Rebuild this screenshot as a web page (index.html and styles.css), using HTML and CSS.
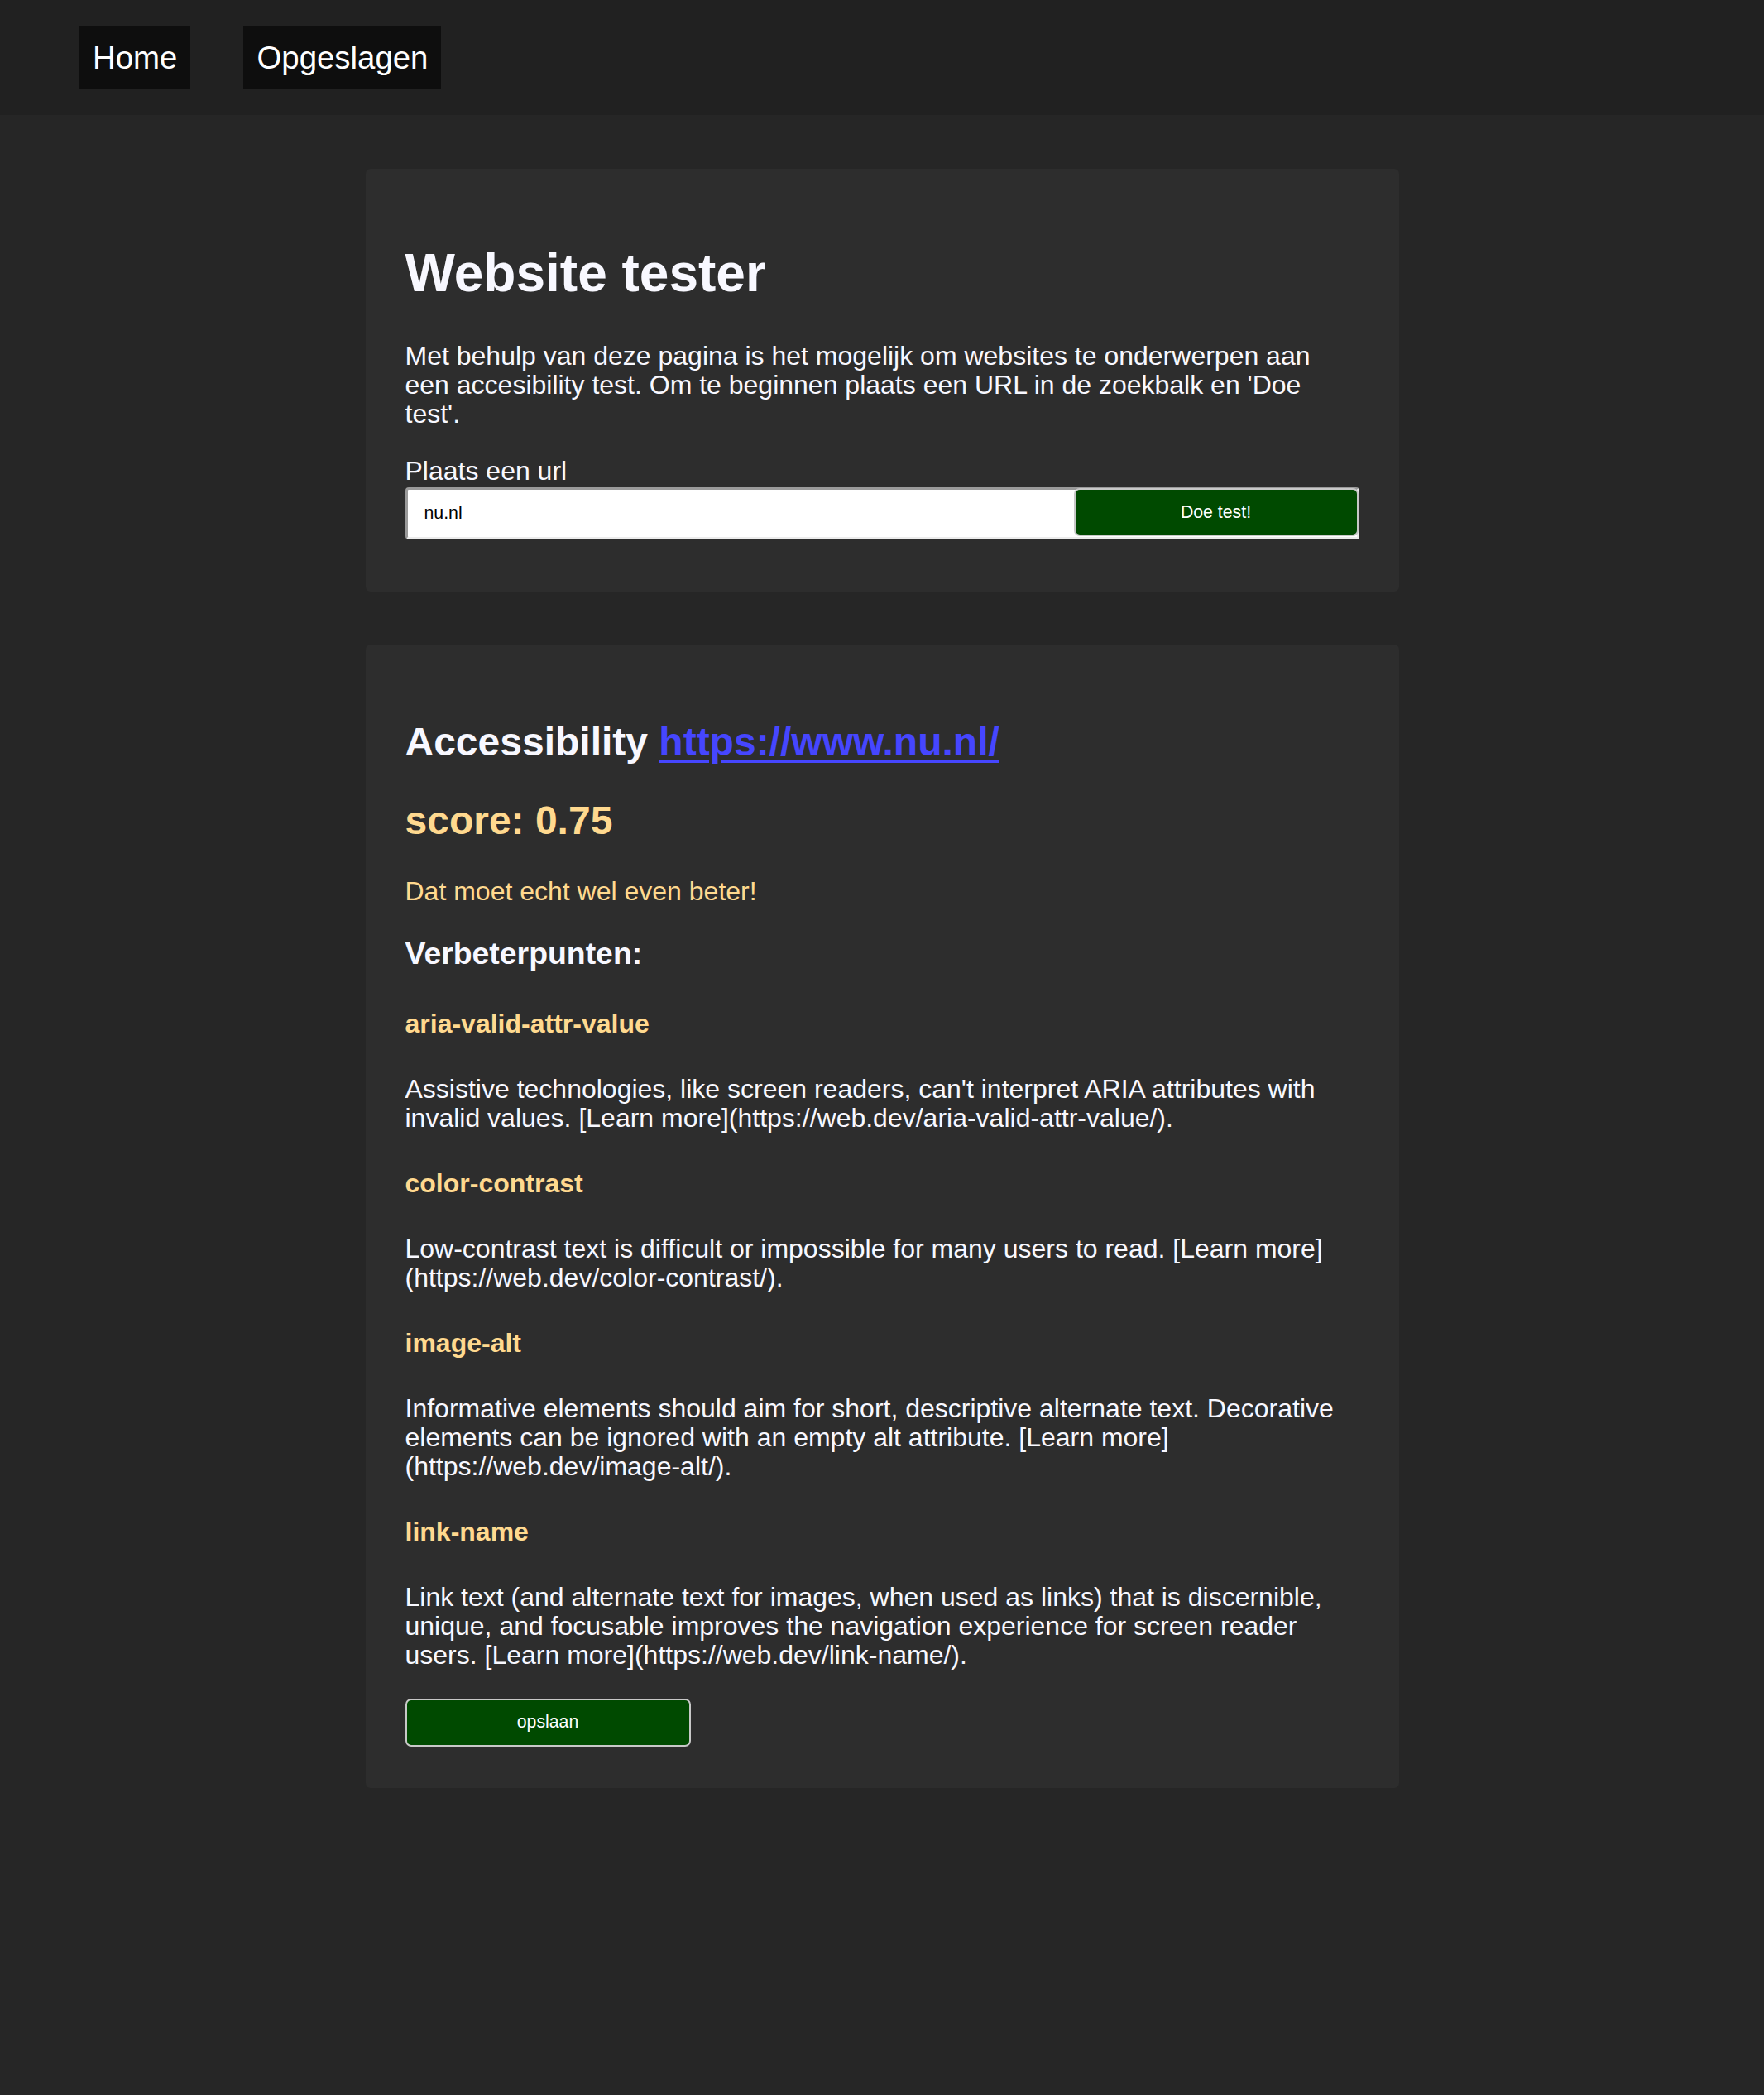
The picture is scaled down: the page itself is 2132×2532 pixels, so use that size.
FILE: index.html
```html
<!DOCTYPE html>
<html lang="nl">
<head>
<meta charset="utf-8">
<title>Website tester</title>
<link rel="stylesheet" href="styles.css">
</head>
<body>
<nav class="topnav">
  <a class="navlink" href="#">Home</a>
  <a class="navlink" href="#">Opgeslagen</a>
</nav>
<main class="main">
  <section class="card">
    <h1 class="title">Website tester</h1>
    <p class="text">Met behulp van deze pagina is het mogelijk om websites te onderwerpen aan een accesibility test. Om te beginnen plaats een URL in de zoekbalk en 'Doe test'.</p>
    <form class="search">
      <label class="label" for="url">Plaats een url</label>
      <div class="field">
        <input class="input" id="url" type="text" value="nu.nl">
        <button class="btn btn-over" type="button">Doe test!</button>
      </div>
    </form>
  </section>
  <section class="card card-result">
    <h2 class="h2">Accessibility <a class="link" href="#">https://www.nu.nl/</a></h2>
    <h2 class="h2 yellow">score: 0.75</h2>
    <p class="text verdict yellow">Dat moet echt wel even beter!</p>
    <h3 class="h3">Verbeterpunten:</h3>
    <h4 class="h4 yellow">aria-valid-attr-value</h4>
    <p class="text">Assistive technologies, like screen readers, can't interpret ARIA attributes with invalid values. [Learn more](https://web.dev/aria-valid-attr-value/).</p>
    <h4 class="h4 yellow">color-contrast</h4>
    <p class="text">Low-contrast text is difficult or impossible for many users to read. [Learn more](https://web.dev/color-contrast/).</p>
    <h4 class="h4 yellow">image-alt</h4>
    <p class="text">Informative elements should aim for short, descriptive alternate text. Decorative elements can be ignored with an empty alt attribute. [Learn more](https://web.dev/image-alt/).</p>
    <h4 class="h4 yellow">link-name</h4>
    <p class="text">Link text (and alternate text for images, when used as links) that is discernible, unique, and focusable improves the navigation experience for screen reader users. [Learn more](https://web.dev/link-name/).</p>
    <div class="actions">
      <button class="btn btn-save" type="button">opslaan</button>
    </div>
  </section>
</main>
</body>
</html>
```
FILE: styles.css
```css
html, body {
  margin: 0;
  padding: 0;
}
body {
  background: #262626;
  color: #f8f8ff;
  font-family: "Liberation Sans", Arial, Helvetica, sans-serif;
  font-size: 32px;
  min-height: 2532px;
}
.topnav {
  background: #212121;
  display: flex;
  gap: 64px;
  padding: 32px 96px 31px;
}
.navlink {
  background: #0e0e0e;
  color: #ffffff;
  text-decoration: none;
  font-size: 38.4px;
  line-height: 44px;
  padding: 16px;
}
.main {
  display: flex;
  flex-direction: column;
  align-items: center;
  gap: 64px;
  padding-top: 65px;
}
.card {
  box-sizing: border-box;
  width: 1249px;
  background: #2d2d2d;
  border-radius: 6px;
  padding: 48px 48px 49px;
}
.card-result {
  padding-top: 49.5px;
  padding-bottom: 50px;
}
.title {
  font-size: 64px;
  line-height: 74px;
  margin: 41px 0 46px;
}
.text {
  font-size: 32px;
  line-height: 35px;
  margin: 32px 0;
}
.verdict {
  margin-top: 41.5px;
}
.yellow {
  color: #ffd98f;
}
.h2 {
  font-size: 48px;
  line-height: 55px;
  margin: 40px 0;
}
.h3 {
  font-size: 37.4px;
  line-height: 43px;
  margin: 36px 0 44.5px;
}
.h4 {
  font-size: 32px;
  line-height: 37px;
  margin: 43px 0;
}
.link {
  color: #4646ff;
  text-decoration: underline;
  text-decoration-thickness: 4px;
  text-underline-offset: 5px;
}
.search {
  margin: 34px 0 14px;
}
.label {
  display: block;
  font-size: 32px;
  line-height: 35px;
  margin-bottom: 2px;
}
.field {
  position: relative;
  height: 63px;
}
.input {
  box-sizing: border-box;
  width: 100%;
  height: 63px;
  margin: 0;
  background: #ffffff;
  border: 3px solid;
  border-color: #9a9a9a #ececec #ececec #9a9a9a;
  border-radius: 4px;
  padding: 0 20px;
  font-family: "Liberation Sans", Arial, Helvetica, sans-serif;
  font-size: 21.3px;
  color: #000000;
  outline: none;
}
.btn {
  box-sizing: border-box;
  background: #004a00;
  color: #ffffff;
  border: 2px solid #c8c8c8;
  border-radius: 7px;
  font-family: "Liberation Sans", Arial, Helvetica, sans-serif;
  font-size: 21.3px;
  width: 345px;
  height: 58px;
  padding: 0;
  cursor: pointer;
}
.btn-over {
  position: absolute;
  top: 1px;
  right: 1px;
  width: 344px;
}
.actions {
  margin-top: 35px;
}
.btn-save {
  display: block;
}
```
